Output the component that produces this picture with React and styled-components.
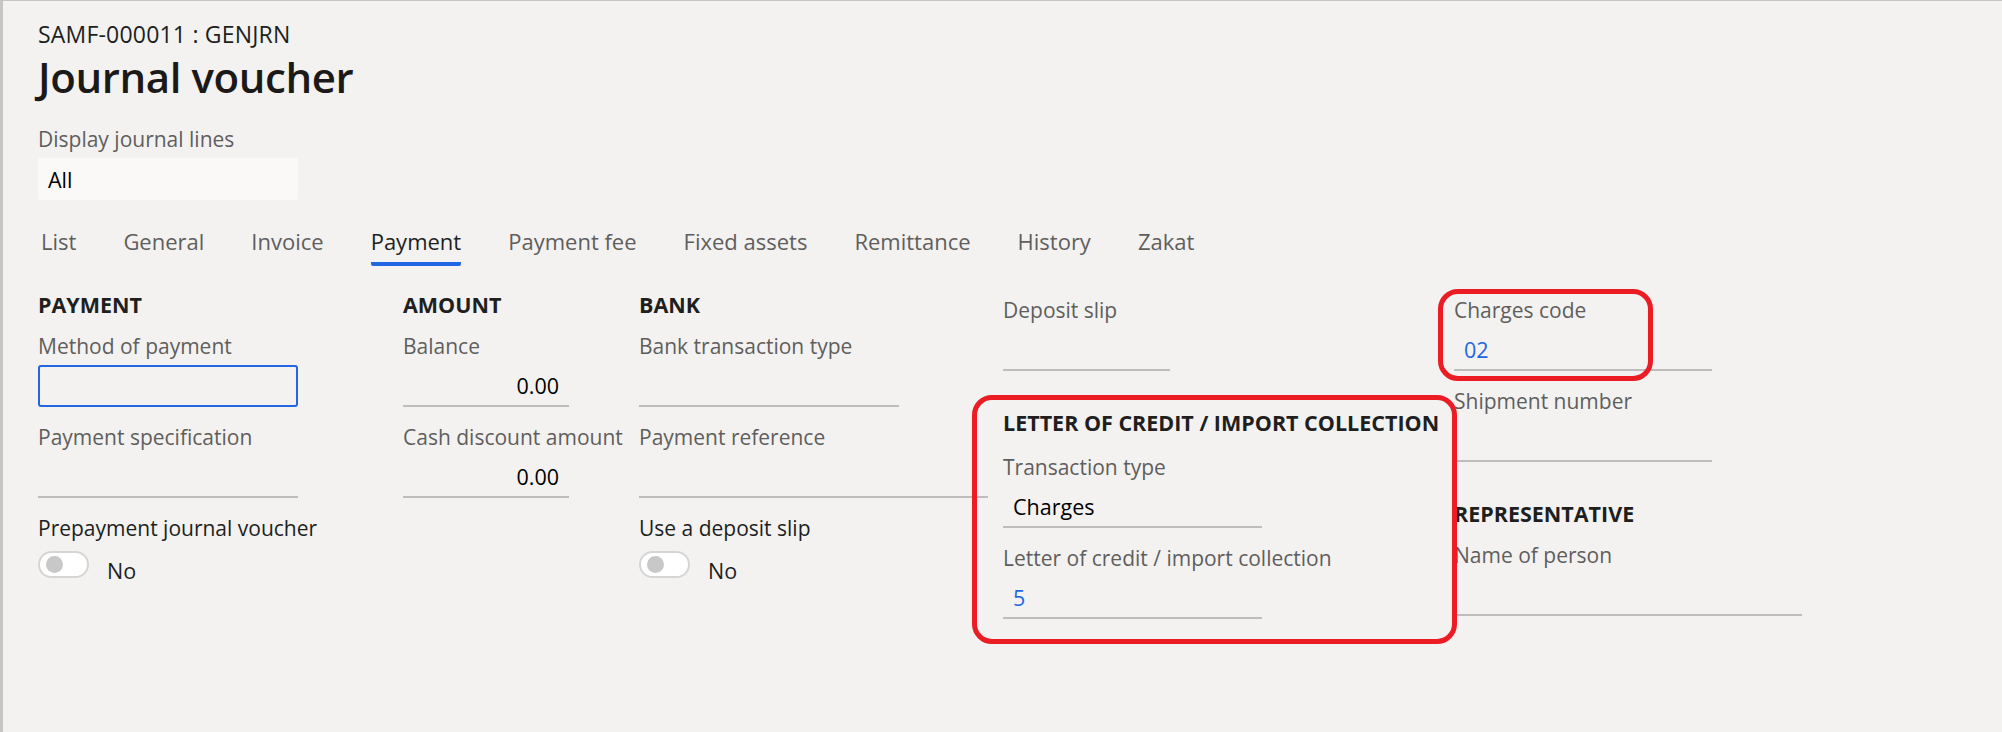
import styled, { createGlobalStyle } from "styled-components";

const GlobalStyle = createGlobalStyle`
  html, body {
    margin: 0;
    padding: 0;
    background: #f3f2f1;
  }
  * {
    box-sizing: border-box;
  }
  body {
    font-family: "Open Sans", "Noto Sans", sans-serif;
    color: #201f1e;
  }
`;

const colors = {
  text: "#201f1e",
  label: "#605e5c",
  line: "#bebdbc",
  blue: "#2266e3",
  red: "#ec1c24",
};

const TABS = [
  "List",
  "General",
  "Invoice",
  "Payment",
  "Payment fee",
  "Fixed assets",
  "Remittance",
  "History",
  "Zakat",
];

const Field = ({ label, value, width, align, link, focused }) => (
  <FieldBox>
    <Label>{label}</Label>
    <Input $width={width} $align={align} $link={link} $focused={focused}>
      {value}
    </Input>
  </FieldBox>
);

const ToggleField = ({ label }) => (
  <ToggleBox>
    <Label $strong>{label}</Label>
    <ToggleRow>
      <Toggle>
        <Knob />
      </Toggle>
      <ToggleText>No</ToggleText>
    </ToggleRow>
  </ToggleBox>
);

export default function App() {
  return (
    <>
      <GlobalStyle />
      <Page>
        <Caption>SAMF-000011 : GENJRN</Caption>
        <Title>Journal voucher</Title>

        <FilterLabel>Display journal lines</FilterLabel>
        <FilterInput>All</FilterInput>

        <Tabs>
          {TABS.map((t) => (
            <Tab key={t} $active={t === "Payment"}>
              {t}
            </Tab>
          ))}
        </Tabs>

        <Sections>
          <Column $width={365}>
            <Group>
              <GroupHeader>PAYMENT</GroupHeader>
              <Field label="Method of payment" width={260} focused />
              <Field label="Payment specification" width={260} />
              <ToggleField label="Prepayment journal voucher" />
            </Group>
          </Column>

          <Column $width={236}>
            <Group>
              <GroupHeader>AMOUNT</GroupHeader>
              <Field label="Balance" value="0.00" width={166} align="right" />
              <Field
                label="Cash discount amount"
                value="0.00"
                width={166}
                align="right"
              />
            </Group>
          </Column>

          <Column $width={364}>
            <Group>
              <GroupHeader>BANK</GroupHeader>
              <Field label="Bank transaction type" width={260} />
              <Field label="Payment reference" width={349} />
              <ToggleField label="Use a deposit slip" />
            </Group>
          </Column>

          <Column $width={451}>
            <Group $plain>
              <Field label="Deposit slip" width={167} />
            </Group>
            <Group>
              <Highlight $top={-14} $left={-31} $right={-3} $bottom={-9} />
              <GroupHeader $gap={16}>
                LETTER OF CREDIT / IMPORT COLLECTION
              </GroupHeader>
              <Field label="Transaction type" value="Charges" width={259} />
              <Field
                label="Letter of credit / import collection"
                value="5"
                width={259}
                link
              />
            </Group>
          </Column>

          <Column>
            <Group $plain>
              <Marked>
                <Highlight $top={-7} $left={-16} $right={59} $bottom={-10} />
                <Field label="Charges code" value="02" width={258} link />
              </Marked>
              <Field label="Shipment number" width={258} />
            </Group>
            <Group>
              <GroupHeader>REPRESENTATIVE</GroupHeader>
              <Field label="Name of person" width={348} />
            </Group>
          </Column>
        </Sections>
      </Page>
    </>
  );
}

const Page = styled.div`
  min-height: 100vh;
  border-top: 1px solid #c6c5c4;
  border-left: 3px solid #c6c5c4;
  padding: 18px 0 0 35px;
`;

const Caption = styled.div`
  font-size: 23px;
  line-height: 30px;
  letter-spacing: 0.2px;
  color: ${colors.text};
`;

const Title = styled.h1`
  margin: 0 0 20px;
  font-size: 42px;
  line-height: 56px;
  font-weight: 600;
  color: #1b1a19;
  letter-spacing: -0.4px;
`;

const FilterLabel = styled.div`
  font-size: 21px;
  line-height: 28px;
  color: ${colors.label};
  margin-bottom: 5px;
`;

const FilterInput = styled.div`
  width: 260px;
  height: 42px;
  padding: 0 10px;
  display: flex;
  align-items: center;
  background: #faf9f8;
  border-radius: 2px;
  font-size: 21.5px;
  color: #000;
`;

const Tabs = styled.nav`
  display: flex;
  gap: 47px;
  margin-top: 26px;
  padding-left: 3px;
`;

const Tab = styled.div`
  font-size: 22px;
  line-height: 30px;
  padding-bottom: 6px;
  color: ${(p) => (p.$active ? colors.text : colors.label)};
  border-bottom: 4px solid ${(p) => (p.$active ? colors.blue : "transparent")};
  border-radius: 2px;
`;

const Sections = styled.div`
  display: flex;
  align-items: flex-start;
  margin-top: 25px;
`;

const Column = styled.div`
  display: flex;
  flex-direction: column;
  ${(p) => (p.$width ? `width: ${p.$width}px; flex: none;` : "flex: 1;")}
`;

const Group = styled.section`
  position: relative;
  padding-top: ${(p) => (p.$plain ? "5px" : "0")};
  margin-bottom: 22px;
`;

const GroupHeader = styled.h2`
  margin: 0 0 ${(p) => p.$gap ?? 13}px;
  font-size: 21.5px;
  line-height: 28px;
  font-weight: 700;
  color: ${colors.text};
  white-space: nowrap;
`;

const FieldBox = styled.div`
  margin-bottom: 16px;
`;

const Label = styled.div`
  font-size: 21px;
  line-height: 28px;
  color: ${(p) => (p.$strong ? colors.text : colors.label)};
  margin-bottom: 5px;
  white-space: nowrap;
`;

const Input = styled.div`
  width: ${(p) => p.$width}px;
  height: 42px;
  padding: 0 10px;
  display: flex;
  align-items: center;
  justify-content: ${(p) => (p.$align === "right" ? "flex-end" : "flex-start")};
  font-size: 21.5px;
  color: ${(p) => (p.$link ? colors.blue : "#000")};
  border-bottom: 2px solid ${colors.line};
  ${(p) =>
    p.$focused &&
    `
    border: 2px solid ${colors.blue};
    border-radius: 3px;
  `}
`;

const ToggleBox = styled.div`
  margin-top: 3px;
`;

const ToggleRow = styled.div`
  display: flex;
  align-items: flex-start;
  gap: 18px;
  margin-top: 9px;
`;

const Toggle = styled.div`
  width: 51px;
  height: 27px;
  border: 2px solid #d6d5d4;
  border-radius: 14px;
  background: #fff;
  display: flex;
  align-items: center;
  padding-left: 6px;
`;

const Knob = styled.span`
  width: 17px;
  height: 17px;
  border-radius: 50%;
  background: #c8c8c8;
`;

const ToggleText = styled.span`
  font-size: 21.5px;
  line-height: 28px;
  margin-top: 6px;
  color: ${colors.text};
`;

const Marked = styled.div`
  position: relative;
  width: fit-content;
`;

const Highlight = styled.div`
  position: absolute;
  top: ${(p) => p.$top}px;
  left: ${(p) => p.$left}px;
  right: ${(p) => p.$right}px;
  bottom: ${(p) => p.$bottom}px;
  border: 5px solid ${colors.red};
  border-radius: 20px;
  pointer-events: none;
  z-index: 2;
`;
